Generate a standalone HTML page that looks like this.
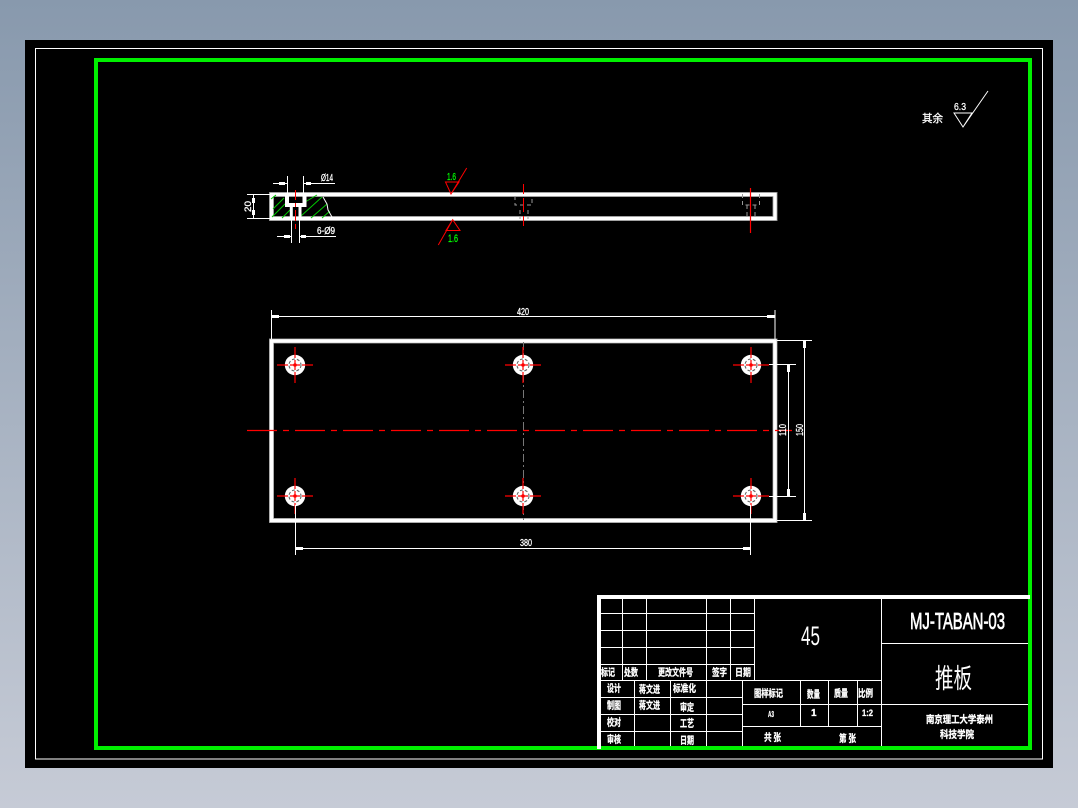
<!DOCTYPE html>
<html><head><meta charset="utf-8"><style>
html,body{margin:0;padding:0;width:1078px;height:808px;overflow:hidden;background:linear-gradient(#8899ad,#c6cbd6)}
svg{display:block;position:absolute;left:0;top:0}
text{fill:#fff;stroke:#fff;stroke-width:.3;font-family:"Liberation Sans","Noto Sans CJK SC",sans-serif}
.c{font-family:"WenQuanYi Zen Hei","Noto Sans CJK SC",sans-serif}
.g{fill:#0f0;stroke:#0f0}
.t{stroke-width:0}
</style></head><body>
<svg width="1078" height="808" viewBox="0 0 1078 808" xmlns="http://www.w3.org/2000/svg">
<defs>
<g id="h"><circle r="10.2" fill="#fff"/><circle r="6" fill="none" stroke="#666" stroke-width="1.1" stroke-dasharray="3 2"/><path d="M-18 0H-7M-5 0H5M7 0H18M0 -18V-7M0 -5V5M0 7V18" stroke="#f00" stroke-width="1.2"/><circle r="1.8" fill="#f00"/></g>
</defs>
<rect x="25" y="40" width="1028" height="728" fill="#000"/>
<rect x="35.5" y="48.5" width="1007" height="710.5" fill="none" stroke="#fff" stroke-width="1"/>
<rect x="96" y="60" width="934" height="688" fill="none" stroke="#00f000" stroke-width="4"/>

<!-- section view -->
<rect x="271.5" y="194.5" width="503.5" height="24" fill="none" stroke="#8a8a8a" stroke-width="5"/>
<rect x="271.5" y="194.5" width="503.5" height="24" fill="none" stroke="#fff" stroke-width="3.4"/>
<g stroke="#00c800" stroke-width="1" fill="none">
<path d="M271 199L276 195M273 209L284 198M272 217L288 201M282 218L290 210M300 205L317 195M301 216L322 197M311 218L327 204M322 218L330 211"/>
</g>
<path d="M287 196V205H304.5V196" fill="none" stroke="#fff" stroke-width="4"/>
<path d="M291.3 205V218M300 205V218" fill="none" stroke="#fff" stroke-width="3"/>
<path d="M323 197L327 204L328 210L332 217" fill="none" stroke="#fff" stroke-width="1"/>
<path d="M295.5 190V200M295.5 203V207M295.5 210V221M295.5 224V229" stroke="#f00" stroke-width="1" fill="none"/>
<g stroke="#fff" stroke-width="1" fill="none">
<path d="M247 194.5H270M247 218.5H270M253.5 194V218.5"/>
<path d="M287.5 176V194M303.5 176V194M273 183.5H287M304 183.5H335"/>
<path d="M291.5 218V243M299.5 218V243M277 236.5H291M300 236.5H336"/>
</g>
<path d="M252 198H255V203H252ZM252 210H255V215H252ZM279 182H285V185H279ZM306 182H311V185H306ZM284 235H290V238H284ZM301 235H306V238H301Z" fill="#fff"/>
<text font-size="9" transform="translate(251,212) rotate(-90)" textLength="11" lengthAdjust="spacingAndGlyphs">20</text>
<text x="321" y="181" font-size="10" textLength="12" lengthAdjust="spacingAndGlyphs">Ø14</text>
<text x="317" y="234" font-size="10" textLength="18" lengthAdjust="spacingAndGlyphs">6-Ø9</text>

<path d="M445.5 182H459L451 194ZM451 194L466.7 168" fill="none" stroke="#f00" stroke-width="1"/>
<path d="M452.7 219.7L446 230.5H460ZM452.7 219.7L438.3 245" fill="none" stroke="#f00" stroke-width="1"/>
<text class="g" x="447" y="180" font-size="10" textLength="9" lengthAdjust="spacingAndGlyphs">1.6</text>
<text class="g" x="448" y="242" font-size="11" textLength="10" lengthAdjust="spacingAndGlyphs">1.6</text>

<g stroke="#999" stroke-width="1" fill="none" stroke-dasharray="4 3">
<path d="M515 196V205H532V196M520 210V219M528 210V219"/>
<path d="M742.5 194V205H759.5V194M747 205V219M755 205V219"/>
</g>
<path d="M523.5 184V194M523.5 198V212M523.5 216V226" stroke="#f00" stroke-width="1" fill="none"/>
<path d="M750.5 188V233" stroke="#f00" stroke-width="1.2" fill="none"/>

<!-- top view -->
<rect x="271.5" y="341" width="503.5" height="179.5" fill="none" stroke="#8a8a8a" stroke-width="5"/>
<rect x="271.5" y="341" width="503.5" height="179.5" fill="none" stroke="#fff" stroke-width="3.6"/>
<path d="M523.5 342V520" stroke="#777" stroke-width="1" stroke-dasharray="8 3 2 3" fill="none"/>
<path d="M247 430.5H792" stroke="#f00" stroke-width="1.2" stroke-dasharray="30 6 6 6" fill="none"/>
<use href="#h" x="295" y="365"/>
<use href="#h" x="523" y="365"/>
<use href="#h" x="751" y="365"/>
<use href="#h" x="295" y="496"/>
<use href="#h" x="523" y="496"/>
<use href="#h" x="751" y="496"/>
<g stroke="#fff" stroke-width="1" fill="none">
<path d="M271.5 310V339M775 310V339M271.5 316.5H775"/>
<path d="M295.5 505V555M750.5 505V555M295.5 548.5H750.5"/>
<path d="M769 364.5H796M769 496.5H796M788.5 364.5V496.5"/>
<path d="M777 340.5H812M777 520.5H812M804.5 340.5V520.5"/>
</g>
<path d="M272 315H279V318H272ZM767 315H775V318H767ZM296 547H303V550H296ZM743 547H750V550H743ZM787 365H790V372H787ZM787 489H790V496H787ZM803 341H806V348H803ZM803 513H806V520H803Z" fill="#fff"/>
<text x="517" y="315" font-size="10" textLength="12" lengthAdjust="spacingAndGlyphs">420</text>
<text x="520" y="546" font-size="10" textLength="12" lengthAdjust="spacingAndGlyphs">380</text>
<text font-size="10" transform="translate(786,436) rotate(-90)" textLength="12" lengthAdjust="spacingAndGlyphs">110</text>
<text font-size="10" transform="translate(803,436) rotate(-90)" textLength="12" lengthAdjust="spacingAndGlyphs">150</text>

<!-- roughness -->
<path d="M954 113H972L963 127ZM963 127L988 91" fill="none" stroke="#fff" stroke-width="1"/>
<text x="954" y="110" font-size="10" textLength="12" lengthAdjust="spacingAndGlyphs">6.3</text>
<text class="c" x="922" y="122" font-size="11" textLength="21" lengthAdjust="spacingAndGlyphs">其余</text>

<!-- title block -->
<path d="M599 749V597H1030" fill="none" stroke="#fff" stroke-width="4"/>
<g stroke="#fff" stroke-width="1" fill="none">
<path d="M600 613.5H754M600 630.5H754M600 647.5H754M600 664.5H754"/>
<path d="M622.5 598V680M646.5 598V680M706.5 598V680M730.5 598V680M754.5 598V680"/>
<path d="M600 680.5H881M600 697.5H742M600 714.5H742M600 731.5H742"/>
<path d="M634.5 680V746M670.5 680V746M706.5 680V746M742.5 680V746"/>
<path d="M742 704.5H881M742 726.5H881M800.5 680V726M828.5 680V726M857.5 680V726"/>
<path d="M881.5 598V746M881 643.5H1028M881 704.5H1028"/>
</g>
<g font-size="10" font-weight="bold">
<text class="c" x="601" y="676" font-size="10" textLength="14" lengthAdjust="spacingAndGlyphs">标记</text>
<text class="c" x="624" y="676" font-size="10" textLength="14" lengthAdjust="spacingAndGlyphs">处数</text>
<text class="c" x="658" y="676" font-size="10" textLength="35" lengthAdjust="spacingAndGlyphs">更改文件号</text>
<text class="c" x="712" y="676" font-size="10" textLength="15" lengthAdjust="spacingAndGlyphs">签字</text>
<text class="c" x="735" y="676" font-size="10" textLength="16" lengthAdjust="spacingAndGlyphs">日期</text>
<text class="c" x="607" y="692" font-size="10" textLength="14" lengthAdjust="spacingAndGlyphs">设计</text>
<text class="c" x="639" y="693" font-size="10" textLength="21" lengthAdjust="spacingAndGlyphs">蒋文进</text>
<text class="c" x="673" y="692" font-size="10" textLength="23" lengthAdjust="spacingAndGlyphs">标准化</text>
<text class="c" x="607" y="709" font-size="10" textLength="14" lengthAdjust="spacingAndGlyphs">制图</text>
<text class="c" x="639" y="709" font-size="10" textLength="21" lengthAdjust="spacingAndGlyphs">蒋文进</text>
<text class="c" x="680" y="711" font-size="10" textLength="14" lengthAdjust="spacingAndGlyphs">审定</text>
<text class="c" x="607" y="726" font-size="10" textLength="14" lengthAdjust="spacingAndGlyphs">校对</text>
<text class="c" x="680" y="727" font-size="10" textLength="14" lengthAdjust="spacingAndGlyphs">工艺</text>
<text class="c" x="607" y="743" font-size="10" textLength="14" lengthAdjust="spacingAndGlyphs">审核</text>
<text class="c" x="680" y="744" font-size="10" textLength="14" lengthAdjust="spacingAndGlyphs">日期</text>
<text class="c" x="754" y="697" font-size="10" textLength="29" lengthAdjust="spacingAndGlyphs">图样标记</text>
<text class="c" x="807" y="698" font-size="10" textLength="13" lengthAdjust="spacingAndGlyphs">数量</text>
<text class="c" x="834" y="697" font-size="10" textLength="14" lengthAdjust="spacingAndGlyphs">质量</text>
<text class="c" x="858" y="697" font-size="10" textLength="15" lengthAdjust="spacingAndGlyphs">比例</text>
<text x="768" y="717" font-size="8" textLength="6" lengthAdjust="spacingAndGlyphs">A3</text>
<text x="811" y="716" font-size="10">1</text>
<text x="862" y="716" font-size="9" textLength="11" lengthAdjust="spacingAndGlyphs">1:2</text>
<text class="c" x="764" y="741" font-size="10" textLength="17" lengthAdjust="spacingAndGlyphs">共 张</text>
<text class="c" x="839" y="742" font-size="10" textLength="17" lengthAdjust="spacingAndGlyphs">第 张</text>
<text class="c" x="926" y="723" font-size="10" textLength="67" lengthAdjust="spacingAndGlyphs">南京理工大学泰州</text>
<text class="c" x="940" y="738" font-size="10" textLength="34" lengthAdjust="spacingAndGlyphs">科技学院</text>
</g>
<text class="t" x="801" y="645" font-size="27" textLength="19" lengthAdjust="spacingAndGlyphs">45</text>
<text x="910" y="629" font-size="23" textLength="95" lengthAdjust="spacingAndGlyphs" style="stroke-width:.7">MJ-TABAN-03</text>
<text class="c t" x="935" y="688" font-size="27" textLength="37" lengthAdjust="spacingAndGlyphs">推板</text>
</svg>
</body></html>
